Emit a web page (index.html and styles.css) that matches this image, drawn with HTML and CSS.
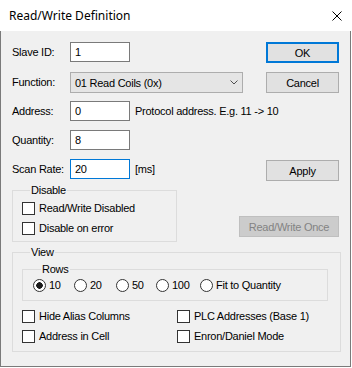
FILE: index.html
```html
<!DOCTYPE html>
<html lang="en">
<head>
    <meta charset="UTF-8">
    <title>Read/Write Definition</title>
    <link rel="stylesheet" href="styles.css">
</head>
<body>
    <div class="dialog">
        <div class="titlebar">
            <span class="title">Read/Write Definition</span>
            <svg class="close" width="10" height="10" viewBox="0 0 10 10">
                <path d="M0.5 0.5 L9.5 9.5 M9.5 0.5 L0.5 9.5" stroke="#000" stroke-width="1" fill="none"/>
            </svg>
        </div>

        <div class="content">
            <div class="form">
                <label class="lbl">Slave ID:</label>
                <div class="line"><input class="field" value="1"></div>
                <button class="btn btn-default">OK</button>

                <label class="lbl">Function:</label>
                <div class="line">
                    <div class="select">
                        <span>01 Read Coils (0x)</span>
                        <svg width="8" height="5" viewBox="0 0 8 5">
                            <path d="M0.5 0.5 L4 4 L7.5 0.5" stroke="#505050" fill="none"/>
                        </svg>
                    </div>
                </div>
                <button class="btn">Cancel</button>

                <label class="lbl">Address:</label>
                <div class="line"><input class="field" value="0"><span class="hint">Protocol address. E.g. 11 -&gt; 10</span></div>
                <div></div>

                <label class="lbl">Quantity:</label>
                <div class="line"><input class="field" value="8"></div>
                <div></div>

                <label class="lbl">Scan Rate:</label>
                <div class="line"><input class="field focused" value="20"><span class="hint">[ms]</span></div>
                <button class="btn btn-apply">Apply</button>
            </div>

            <div class="middle">
                <fieldset class="group disable-group">
                    <legend>Disable</legend>
                    <label class="check"><input type="checkbox"><span>Read/Write Disabled</span></label>
                    <label class="check"><input type="checkbox"><span>Disable on error</span></label>
                </fieldset>
                <button class="btn btn-off" disabled>Read/Write Once</button>
            </div>

            <fieldset class="group view-group">
                <legend>View</legend>
                <fieldset class="group rows-group">
                    <legend>Rows</legend>
                    <div class="radios">
                        <label class="radio"><input type="radio" name="rows" checked><span>10</span></label>
                        <label class="radio"><input type="radio" name="rows"><span>20</span></label>
                        <label class="radio"><input type="radio" name="rows"><span>50</span></label>
                        <label class="radio"><input type="radio" name="rows"><span>100</span></label>
                        <label class="radio"><input type="radio" name="rows"><span>Fit to Quantity</span></label>
                    </div>
                </fieldset>
                <div class="options">
                    <label class="check"><input type="checkbox"><span>Hide Alias Columns</span></label>
                    <label class="check"><input type="checkbox"><span>PLC Addresses (Base 1)</span></label>
                    <label class="check"><input type="checkbox"><span>Address in Cell</span></label>
                    <label class="check"><input type="checkbox"><span>Enron/Daniel Mode</span></label>
                </div>
            </fieldset>
        </div>
    </div>
</body>
</html>
```

FILE: styles.css
```css
* {
    margin: 0;
    padding: 0;
    box-sizing: border-box;
}

body {
    background: #ffffff;
    font-family: 'Liberation Sans', Arial, sans-serif;
    font-size: 11px;
    color: #000;
}

/* Window frame */
.dialog {
    width: 351px;
    height: 367px;
    display: flex;
    flex-direction: column;
}

.titlebar {
    height: 31px;
    flex: none;
    display: flex;
    align-items: center;
    justify-content: space-between;
    padding: 0 9px 0 9px;
    background: #ffffff;
}

.title {
    font-family: 'Noto Sans', 'Liberation Sans', sans-serif;
    font-size: 12px;
    line-height: 16px;
    padding-top: 1px;
}

.close {
    display: block;
}

.content {
    flex: 1;
    background: #f0f0f0;
    border: 1px solid #7a7a7a;
    border-top: none;
    padding: 11px 11px 0 11px;
    letter-spacing: -0.25px;
}

/* Top form */
.form {
    display: grid;
    grid-template-columns: 58px minmax(0, 1fr) 73px;
    grid-template-rows: 22px 21px 21px 21px 22px;
    row-gap: 8px;
    align-items: start;
}

.lbl {
    line-height: 20px;
}

.line {
    display: flex;
    align-items: center;
    gap: 5px;
}

.hint {
    white-space: nowrap;
}

.field {
    width: 60px;
    height: 20px;
    flex: none;
    border: 1px solid #7a7a7a;
    background: #fff;
    padding: 0 4px;
    font: inherit;
    letter-spacing: inherit;
    color: #000;
    outline: none;
}

.field.focused {
    border-color: #0078d7;
}

.select {
    width: 173px;
    height: 21px;
    flex: none;
    border: 1px solid #adadad;
    background: #e5e5e5;
    display: flex;
    align-items: center;
    justify-content: space-between;
    padding: 0 4px 0 4px;
}

.select svg {
    display: block;
}

.btn {
    height: 21px;
    border: 1px solid #adadad;
    background: #e1e1e1;
    font: inherit;
    letter-spacing: inherit;
    color: #000;
}

.btn-default {
    border: 2px solid #0078d7;
}

.btn-apply {
    margin-top: 1px;
}

.btn-off {
    width: 100px;
    margin-top: 32px;
    margin-left: auto;
    background: #cccccc;
    border-color: #bfbfbf;
    color: #838383;
}

/* Group boxes */
.group {
    border: 1px solid #dcdcdc;
    min-width: 0;
}

.group legend {
    margin-left: 8px;
    padding: 0 1px;
    line-height: 13px;
}

.middle {
    display: flex;
    align-items: flex-start;
    margin-top: 3px;
}

.disable-group {
    width: 165px;
    padding: 1px 8px 3px 9px;
}

.view-group {
    width: 329px;
    margin-top: 4px;
    padding: 4px 12px 5px 9px;
}

.rows-group {
    padding: 0 8px 6px 10px;
}

.radios {
    display: grid;
    grid-template-columns: 41px 42px 40px 44px auto;
    height: 18px;
    align-items: center;
}

.options {
    display: grid;
    grid-template-columns: 155px 1fr;
    margin-top: 5px;
}

/* Check boxes and radio buttons */
.check,
.radio {
    display: flex;
    align-items: center;
    height: 20px;
}

.radio {
    height: 18px;
}

.check input,
.radio input {
    appearance: none;
    width: 13px;
    height: 13px;
    flex: none;
    border: 1px solid #333;
    background: #fff;
    margin-right: 4px;
}

.radio input {
    border-radius: 50%;
    margin-right: 3px;
}

.radio input:checked {
    background: radial-gradient(circle, #1a1a1a 0 3px, #fff 3.5px);
}
```
